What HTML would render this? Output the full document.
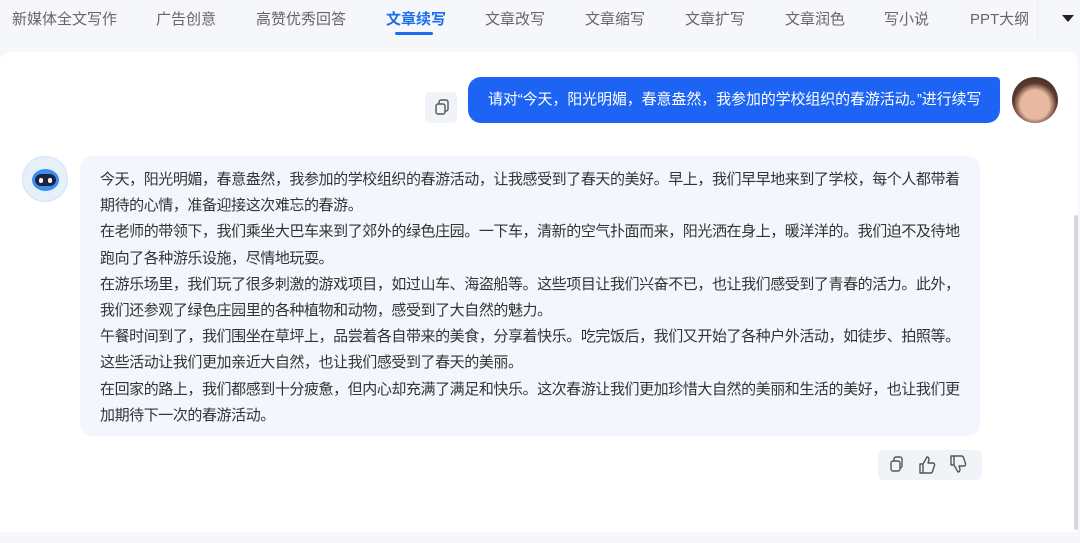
<!DOCTYPE html>
<html><head><meta charset="utf-8"><style>
*{margin:0;padding:0;box-sizing:border-box}
body{width:1080px;height:543px;overflow:hidden;background:#f5f7fb;font-family:"Liberation Sans","Noto Sans CJK SC",sans-serif;position:relative}
.nav span{position:absolute;top:10px;font-size:15px;color:#666;line-height:20px;white-space:nowrap}
.nav .act{color:#1a6cf0;font-weight:bold}
.panel{position:absolute;left:0;top:52px;width:1078px;height:480px;background:#fff;border-radius:10px 10px 0 0}
.ub{position:absolute;left:468px;top:77px;width:532px;height:46px;background:#1d64f5;border-radius:13px 4px 13px 13px;color:#fff;font-size:15px;line-height:46px;padding-left:20px;white-space:nowrap;letter-spacing:-0.12px}
.ans{position:absolute;left:80px;top:156px;width:900px;height:280px;background:#f3f7fd;border-radius:12px;padding:11px 0 11px 20px;font-size:15px;color:#333;line-height:26.2px;white-space:nowrap;letter-spacing:-0.43px}
.btn{position:absolute;background:#f0f3f8;border-radius:5px}
</style></head><body>
<div class="nav">
<span style="left:12px">新媒体全文写作</span>
<span style="left:156px">广告创意</span>
<span style="left:256px">高赞优秀回答</span>
<span class="act" style="left:386px">文章续写</span>
<span style="left:485px">文章改写</span>
<span style="left:585px">文章缩写</span>
<span style="left:685px">文章扩写</span>
<span style="left:785px">文章润色</span>
<span style="left:884px">写小说</span>
<span style="left:970px">PPT大纲</span>
</div>
<div style="position:absolute;left:395px;top:32px;width:38px;height:3px;border-radius:2px;background:#1a6cf0"></div>
<div style="position:absolute;left:1037px;top:0;width:1px;height:40px;background:#eceef2"></div>
<div style="position:absolute;left:1062px;top:15px;width:0;height:0;border-left:6px solid transparent;border-right:6px solid transparent;border-top:7px solid #222"></div>
<div class="panel"></div>
<div style="position:absolute;left:1074px;top:215px;width:4px;height:315px;background:#d8d8d8;border-radius:2px"></div>
<div class="btn" style="left:425px;top:92px;width:32px;height:31px"><svg width="32" height="31" viewBox="0 0 32 31"><rect x="11" y="12" width="9" height="10" rx="2" fill="none" stroke="#555" stroke-width="1.4"/><path d="M14 12V10a2 2 0 0 1 2-2h5a2 2 0 0 1 2 2v7a2 2 0 0 1-2 2h-1" fill="none" stroke="#555" stroke-width="1.4"/></svg></div>
<div class="ub">请对“今天，阳光明媚，春意盎然，我参加的学校组织的春游活动。”进行续写</div>
<div style="position:absolute;left:1012px;top:77px;width:46px;height:46px;border-radius:50%;background:radial-gradient(circle at 50% 60%,#e8b9a0 0 40%,#5a3a2e 60%,#3a241c);overflow:hidden"></div>
<div style="position:absolute;left:22px;top:156px;width:46px;height:46px;border-radius:50%;background:#e6f0fb;border:1px solid #d5e3f5"><div style="position:absolute;left:9px;top:12px;width:27px;height:22px;border-radius:50%;background:#3d8df0"></div><div style="position:absolute;left:12px;top:17px;width:21px;height:12px;border-radius:6px;background:#1c2440"></div><div style="position:absolute;left:16px;top:21px;width:4px;height:5px;border-radius:2px;background:#fff"></div><div style="position:absolute;left:25px;top:21px;width:4px;height:5px;border-radius:2px;background:#fff"></div></div>
<div class="ans">今天，阳光明媚，春意盎然，我参加的学校组织的春游活动，让我感受到了春天的美好。早上，我们早早地来到了学校，每个人都带着<br>期待的心情，准备迎接这次难忘的春游。<br>在老师的带领下，我们乘坐大巴车来到了郊外的绿色庄园。一下车，清新的空气扑面而来，阳光洒在身上，暖洋洋的。我们迫不及待地<br>跑向了各种游乐设施，尽情地玩耍。<br>在游乐场里，我们玩了很多刺激的游戏项目，如过山车、海盗船等。这些项目让我们兴奋不已，也让我们感受到了青春的活力。此外，<br>我们还参观了绿色庄园里的各种植物和动物，感受到了大自然的魅力。<br>午餐时间到了，我们围坐在草坪上，品尝着各自带来的美食，分享着快乐。吃完饭后，我们又开始了各种户外活动，如徒步、拍照等。<br>这些活动让我们更加亲近大自然，也让我们感受到了春天的美丽。<br>在回家的路上，我们都感到十分疲惫，但内心却充满了满足和快乐。这次春游让我们更加珍惜大自然的美丽和生活的美好，也让我们更<br>加期待下一次的春游活动。</div>
<div class="btn" style="left:878px;top:450px;width:104px;height:30px"><svg width="104" height="30" viewBox="0 0 104 30" fill="none" stroke="#555" stroke-width="1.4" stroke-linejoin="round"><rect x="13" y="11" width="9" height="10" rx="2"/><path d="M16 11V9a2 2 0 0 1 2-2h4a2 2 0 0 1 2 2v7a2 2 0 0 1-2 2"/><path d="M45 14v9h-3v-9zM45 14l4-7c2 0 2 2 2 3l-1 3h5c1 0 2 1 1.5 2.5l-2 6c-.3 1-1 1.5-2 1.5H45"/><path d="M76 15V6h-3v9zM76 15l4 7c2 0 2-2 2-3l-1-3h5c1 0 2-1 1.5-2.5l-2-6C85.2 6.5 84.5 6 83.5 6H76"/></svg></div>
</body></html>
